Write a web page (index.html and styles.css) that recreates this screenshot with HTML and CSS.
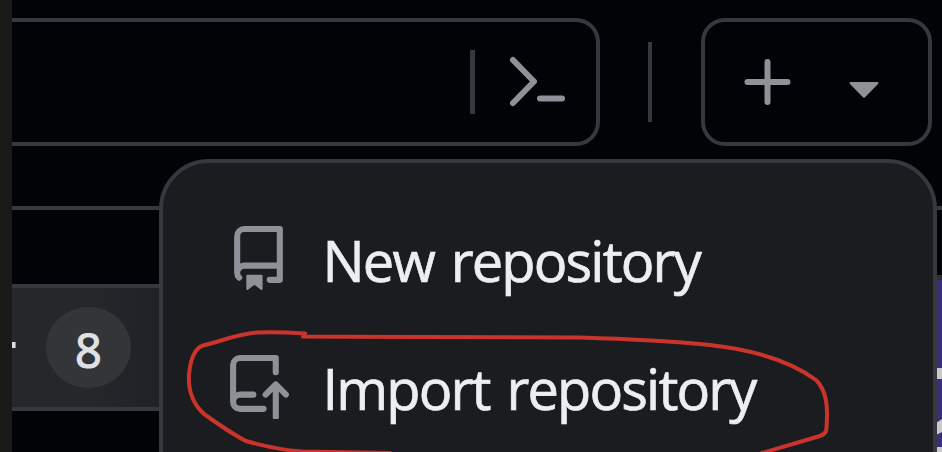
FILE: index.html
```html
<!DOCTYPE html>
<html lang="en">
<head>
<meta charset="utf-8">
<title>Create new</title>
<link rel="stylesheet" href="styles.css">
</head>
<body>
<div class="page">
  <header class="header">
    <div class="search">
      <span class="search-divider"></span>
      <svg class="prompt" viewBox="0 0 60 56" fill="none" stroke="currentColor" stroke-width="6" stroke-linecap="round" stroke-linejoin="round"><path d="M6 6 27 27.500 6 49M33 44.500h22"/></svg>
    </div>
    <span class="divider"></span>
    <button class="create" aria-label="Create new">
      <svg class="plus" viewBox="0 0 48 48" fill="none" stroke="currentColor" stroke-width="6" stroke-linecap="round"><path d="M24.500 4v40M4.500 24h40"/></svg>
      <svg class="caret" viewBox="0 0 32 18" fill="currentColor"><path d="M2 1h28q1 1 0 2L17 16.200q-1 1-2 0L2 3q-1-1 0-2Z"/></svg>
    </button>
  </header>
  <div class="gap"></div>
  <div class="tabs"><span class="tail"></span><span class="count">8</span></div>
  <aside class="art">
    <svg viewBox="0 0 6 172"><path fill="#c9c9cc" d="M0 88h6v11H0zM0 143l6-4v13l-6 3zM0 167h6v5H0z"/></svg>
  </aside>
  <nav class="menu">
    <a class="item">
      <svg class="icon" viewBox="0 0 16 16" fill="currentColor"><path d="M2 2.500A2.500 2.500 0 0 1 4.500 0h8.750a.75.75 0 0 1 .75.75v12.500a.75.75 0 0 1-.75.75h-2.500a.75.75 0 0 1 0-1.500h1.750v-2h-8a1 1 0 0 0-.714 1.700.75.75 0 1 1-1.072 1.050A2.495 2.495 0 0 1 2 11.500Zm10.500-1h-8a1 1 0 0 0-1 1v6.708A2.486 2.486 0 0 1 4.500 9h8ZM5 12.250a.25.25 0 0 1 .25-.25h3.500a.25.25 0 0 1 .25.25v3.250a.25.25 0 0 1-.4.2l-1.450-1.087a.249.249 0 0 0-.3 0L5.400 15.700a.25.25 0 0 1-.4-.2Z"/></svg>
      <span class="label">New repository</span>
    </a>
    <a class="item">
      <svg class="icon" viewBox="0 0 16 16" fill="currentColor"><path transform="translate(0 .25)" d="M1 2.500A2.500 2.500 0 0 1 3.500 0h8.750a.75.75 0 0 1 .75.75v3.500a.75.75 0 0 1-1.500 0V1.500h-8a1 1 0 0 0-1 1v6.708A2.493 2.493 0 0 1 3.500 9h3.250a.75.75 0 0 1 0 1.500H3.500a1 1 0 0 0 0 2h5.750a.75.75 0 0 1 0 1.500H3.500A2.500 2.500 0 0 1 1 11.500Zm13.230 7.790h-.001l-1.224-1.224v6.184a.75.75 0 0 1-1.500 0V9.066L10.280 10.290a.75.75 0 0 1-1.060-1.061l2.505-2.504a.75.75 0 0 1 1.060 0L15.290 9.230a.751.751 0 0 1-.018 1.042.751.751 0 0 1-1.042.018Z"/></svg>
      <span class="label">Import repository</span>
    </a>
  </nav>
  <svg class="annotation" viewBox="0 0 942 452" fill="none" stroke="#ca342b" stroke-width="4" stroke-linecap="round" stroke-linejoin="round"><path d="M305 333.500C290 332.500 270 332 257 332.500C238 334 225 340 203 345.500C194 348 190 362 189 375C188 392 193 404 204 414C218 424 232 434 246 441C263 446 282 450 302 451.500Q345 452 390 453M305 333.500 303 336.500C400 337 500 337 580 337.500C630 339 670 341 710 345C755 350 790 361 816 380C825 389 827 403 827 413C827 420 827 427 826 431Q825 434 820 436L762 453"/></svg>
</div>
</body>
</html>
```
FILE: styles.css
```css
* { box-sizing: border-box; }
body {
  margin: 0;
  background: #020307;
  font-family: "Open Sans", "Noto Sans", sans-serif;
}
.page {
  position: relative;
  width: 942px;
  height: 452px;
  overflow: hidden;
  border-left: 12px solid #1a1a19;
  background: #020307;
}
.header {
  display: flex;
  align-items: flex-start;
  height: 210px;
  padding-top: 18px;
  border-bottom: 4px solid #37383d;
}
.search {
  display: flex;
  align-items: center;
  justify-content: flex-end;
  width: 588px;
  height: 128px;
  padding-right: 29px;
  border: 4px solid #37383d;
  border-left: 0;
  border-radius: 0 24px 24px 0;
}
.search-divider { width: 5px; height: 64px; background: #37383d; }
.prompt { width: 60px; height: 56px; margin-left: 32px; color: #8f9199; }
.divider { width: 4px; height: 80px; margin: 24px 0 0 48px; background: #37383d; }
.create {
  display: flex;
  align-items: center;
  width: 231px;
  height: 128px;
  margin: 0 0 0 49px;
  padding: 0 0 0 38px;
  border: 4px solid #37383d;
  border-radius: 24px;
  background: transparent;
  color: #8f9199;
}
.plus { width: 48px; height: 48px; margin-top: -1px; }
.caret { width: 32px; height: 18px; margin: 16px 0 0 57px; }
.gap { height: 74px; }
.tabs {
  display: flex;
  align-items: center;
  width: 150px;
  height: 127px;
  border: 4px solid #37383d;
  border-width: 4px 0;
  background: linear-gradient(90deg, #26272b 50%, #202126);
  color: #e0e1e5;
}
.tail {
  width: 4px;
  height: 6px;
  margin-top: -6px;
  background: linear-gradient(90deg, #e0e1e5 60%, #8a6a3c);
}
.count {
  width: 85px;
  height: 81px;
  margin-left: 30px;
  border-radius: 50%;
  background: #343539;
  font-size: 47px;
  font-weight: 500;
  line-height: 86px;
  text-align: center;
  -webkit-text-stroke: 1.200px currentColor;
}
.art {
  position: absolute;
  right: 0;
  top: 275px;
  width: 6px;
  height: 177px;
  border-top: 5px solid #303034;
  background: #392e7e;
}
.art svg { display: block; width: 6px; height: 172px; }
.menu {
  position: absolute;
  left: 146.500px;
  top: 158.500px;
  width: 778px;
  height: 340px;
  padding: 32px 0 0 63px;
  border: 4px solid #37383d;
  border-radius: 50px;
  background: #1b1c20;
}
.item { display: flex; align-items: center; height: 128px; color: #edeef2; }
.icon { width: 65px; height: 65px; color: #8f9199; flex: none; }
.label {
  margin-left: 32px;
  padding-top: 2px;
  font-size: 56px;
  line-height: 80px;
  letter-spacing: -1.850px;
  word-spacing: 4px;
  white-space: nowrap;
  -webkit-text-stroke: .7px currentColor;
}
.annotation { position: absolute; left: -12px; top: 0; width: 942px; height: 452px; }
```
